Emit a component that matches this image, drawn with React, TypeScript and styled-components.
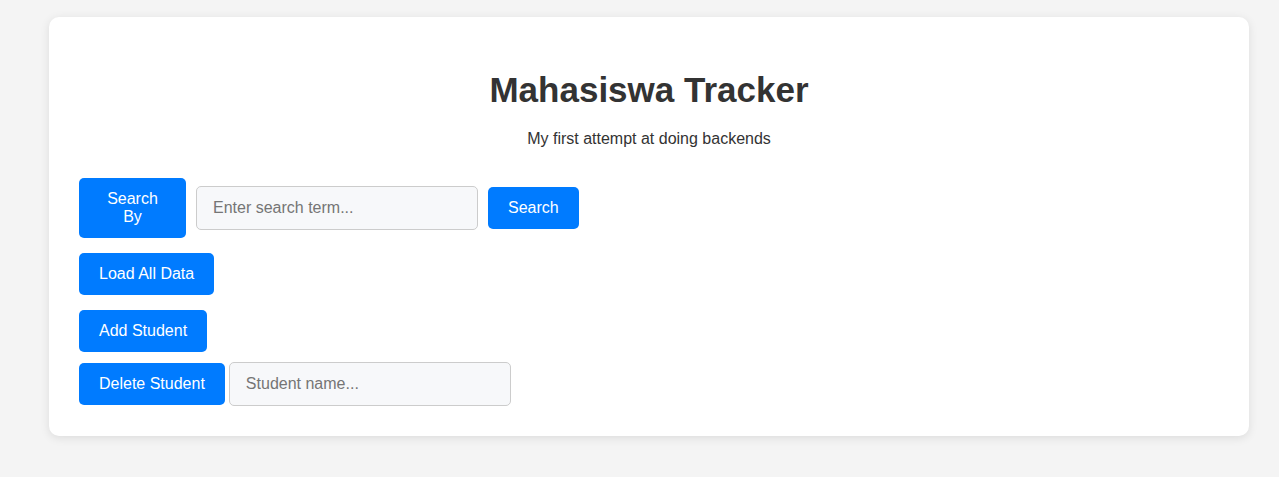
import React from "react";
import styled, { createGlobalStyle } from "styled-components";

const GlobalStyle = createGlobalStyle`
  html, body {
    margin: 0;
    padding: 0;
    background: #f4f4f4;
    font-family: "Liberation Sans", Arial, sans-serif;
    color: #333;
  }
`;

const Page = styled.div`
  padding: 17px 30px 41px 49px;
`;

const Card = styled.div`
  width: 1200px;
  box-sizing: border-box;
  background: #fff;
  border-radius: 10px;
  box-shadow: 0 2px 10px rgba(0, 0, 0, 0.1);
  padding: 30px;
`;

const Title = styled.h1`
  margin: 23px 0 20px;
  font-size: 35px;
  font-weight: bold;
  text-align: center;
  color: #333;
`;

const Subtitle = styled.p`
  margin: 0 0 30px;
  font-size: 16px;
  text-align: center;
  color: #333;
`;

const Controls = styled.div`
  display: flex;
  flex-direction: column;
  align-items: flex-start;
`;

const Row = styled.div<{ $gap: number; $mb: number }>`
  display: flex;
  align-items: center;
  gap: ${(p) => p.$gap}px;
  margin-bottom: ${(p) => p.$mb}px;
`;

const Button = styled.button<{ $width?: number }>`
  font-family: "Liberation Sans", Arial, sans-serif;
  font-size: 16px;
  line-height: 18px;
  padding: 12px 20px;
  background: #007bff;
  color: #fff;
  border: none;
  border-radius: 5px;
  cursor: pointer;
  text-align: center;
  ${(p) => (p.$width ? `width: ${p.$width}px;` : "")}
`;

const Input = styled.input`
  font-family: "Liberation Sans", Arial, sans-serif;
  font-size: 16px;
  line-height: 18px;
  width: 282px;
  box-sizing: border-box;
  padding: 12px 16px;
  background: #f7f8fa;
  border: 1px solid #ccc;
  border-radius: 5px;
  color: #333;
  &::placeholder {
    color: #757575;
  }
`;

export default function App() {
  return (
    <>
      <GlobalStyle />
      <Page>
        <Card>
          <Title>Mahasiswa Tracker</Title>
          <Subtitle>My first attempt at doing backends</Subtitle>
          <Controls>
            <Row $gap={10} $mb={15}>
              <Button $width={107}>Search By</Button>
              <Input placeholder="Enter search term..." />
              <Button>Search</Button>
            </Row>
            <Row $gap={0} $mb={15}>
              <Button>Load All Data</Button>
            </Row>
            <Row $gap={0} $mb={10}>
              <Button>Add Student</Button>
            </Row>
            <Row $gap={4} $mb={0}>
              <Button>Delete Student</Button>
              <Input placeholder="Student name..." />
            </Row>
          </Controls>
        </Card>
      </Page>
    </>
  );
}
